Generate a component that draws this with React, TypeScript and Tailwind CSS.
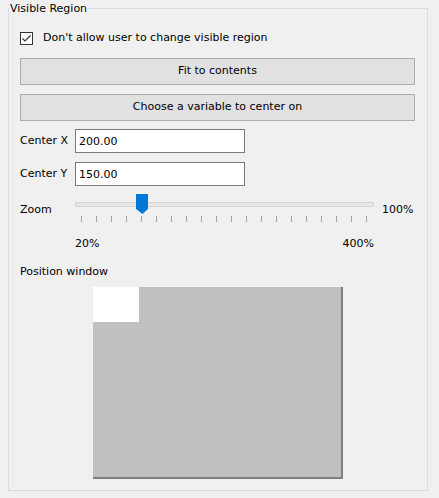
import { useState } from "react";

const font = { fontFamily: '"DejaVu Sans", sans-serif' };

const ZoomSlider = () => {
  const ticks = Array.from({ length: 20 }, (_, i) => 6.5 + i * 15);
  return (
    <svg width="300" height="30" className="block">
      <rect x="0.5" y="9.5" width="298" height="4" fill="#e7e7e7" stroke="#d6d6d6" />
      {ticks.map((x) => (
        <line key={x} x1={x} y1="23" x2={x} y2="29" stroke="#a9a397" strokeWidth="1" />
      ))}
      <path d="M61 1 H73 V16 L67.5 21 L61 16 Z" fill="#0078d7" />
    </svg>
  );
};

export default function App() {
  const [locked, setLocked] = useState(true);

  return (
    <div
      className="w-[439px] h-[498px] bg-[#f0f0f0] pt-[2px] pl-[8px] pr-[11px] text-[11px] text-black"
      style={font}
    >
      <fieldset className="border border-[#dcdcdc] h-[489px]">
        <legend className="px-[1px] leading-[13px]">Visible Region</legend>
        <div className="flex flex-col pl-[11px] pr-[12px] pt-[16px]">
          <label className="flex items-center h-[14px] gap-[10px] cursor-pointer">
            <span
              className="w-[13px] h-[13px] border border-[#333333] bg-white flex items-center justify-center"
              onClick={() => setLocked(!locked)}
            >
              {locked && (
                <svg width="11" height="11" viewBox="0 0 11 11">
                  <path d="M1.5 5.5 L4 8 L9.5 2.5" fill="none" stroke="#333" strokeWidth="1.2" />
                </svg>
              )}
            </span>
            <span>Don't allow user to change visible region</span>
          </label>

          <button className="mt-[13px] h-[27px] border border-[#adadad] bg-[#e1e1e1]">
            Fit to contents
          </button>
          <button className="mt-[9px] h-[27px] border border-[#adadad] bg-[#e1e1e1]">
            Choose a variable to center on
          </button>

          <div className="mt-[8px] flex items-center h-[24px]">
            <span className="w-[55px]">Center X</span>
            <input
              defaultValue="200.00"
              className="w-[170px] h-[24px] border border-[#7a7a7a] bg-white px-[3px] outline-none"
            />
          </div>
          <div className="mt-[9px] flex items-center h-[24px]">
            <span className="w-[55px]">Center Y</span>
            <input
              defaultValue="150.00"
              className="w-[170px] h-[24px] border border-[#7a7a7a] bg-white px-[3px] outline-none"
            />
          </div>

          <div className="mt-[7px] flex items-start h-[30px]">
            <span className="w-[55px] mt-[9px]">Zoom</span>
            <ZoomSlider />
            <span className="ml-[7px] mt-[9px]">100%</span>
          </div>
          <div className="mt-[13px] flex h-[14px] w-[354px] pl-[55px] justify-between">
            <span>20%</span>
            <span>400%</span>
          </div>

          <div className="mt-[14px] h-[14px]">Position window</div>
          <div className="mt-[9px] ml-[73px] w-[250px] h-[192px] bg-[#c0c0c0] border-r-2 border-b-2 border-[#808080]">
            <div className="w-[46px] h-[35px] bg-white" />
          </div>
        </div>
      </fieldset>
    </div>
  );
}
